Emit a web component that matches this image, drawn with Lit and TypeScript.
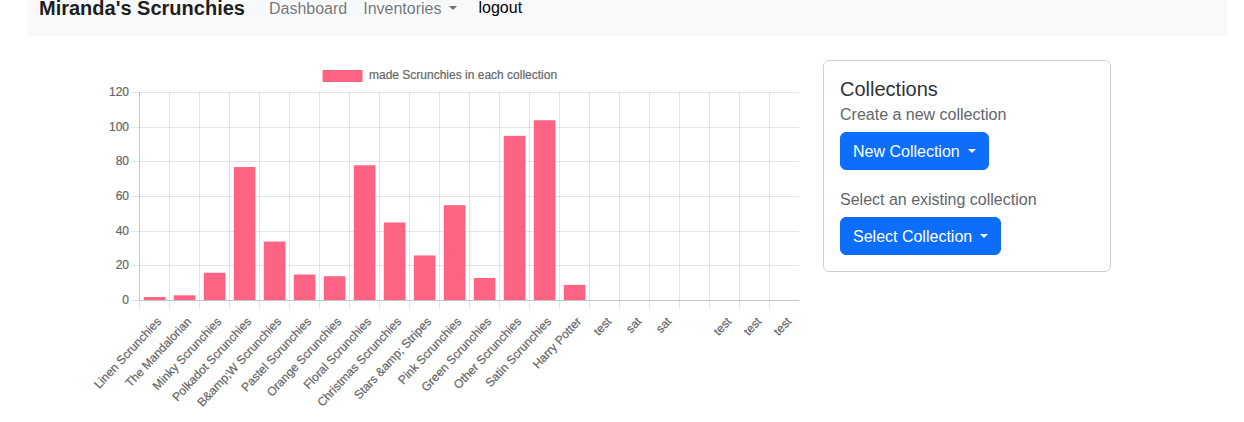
import { LitElement, html, svg, css } from "lit";
import { customElement, property } from "lit/decorators.js";

interface Entry {
  label: string;
  value: number;
}

const COLLECTIONS: Entry[] = [
  { label: "Linen Scrunchies", value: 2 },
  { label: "The Mandalorian", value: 3 },
  { label: "Minky Scrunchies", value: 16 },
  { label: "Polkadot Scrunchies", value: 77 },
  { label: "B&amp;W Scrunchies", value: 34 },
  { label: "Pastel Scrunchies", value: 15 },
  { label: "Orange Scrunchies", value: 14 },
  { label: "Floral Scrunchies", value: 78 },
  { label: "Christmas Scrunchies", value: 45 },
  { label: "Stars &amp; Stripes", value: 26 },
  { label: "Pink Scrunchies", value: 55 },
  { label: "Green Scrunchies", value: 13 },
  { label: "Other Scrunchies", value: 95 },
  { label: "Satin Scrunchies", value: 104 },
  { label: "Harry Potter", value: 9 },
  { label: "test", value: 0 },
  { label: "sat", value: 0 },
  { label: "sat", value: 0 },
  { label: "", value: 0 },
  { label: "test", value: 0 },
  { label: "test", value: 0 },
  { label: "test", value: 0 },
];

@customElement("bar-chart")
export class BarChart extends LitElement {
  @property({ attribute: false }) entries: Entry[] = [];
  @property() legend = "";

  static styles = css`
    :host {
      display: block;
    }
    .chart {
      display: block;
      width: 100%;
      height: auto;
      overflow: visible;
      font-family: "Liberation Sans", Arial, sans-serif;
      font-size: 12px;
    }
    .text {
      fill: #666;
      stroke: #666;
      stroke-width: 0.2px;
    }
    .end {
      text-anchor: end;
    }
    .bar {
      fill: #ff6384;
    }
    .line {
      stroke: rgba(0, 0, 0, 0.1);
    }
    .axis {
      stroke: rgba(0, 0, 0, 0.22);
    }
  `;

  render() {
    const left = 60;
    const top = 32;
    const bottom = 240;
    const right = 720;
    const max = 120;
    const step = (right - left) / this.entries.length;
    const scale = (v: number) => bottom + 0.5 - (v / max) * (bottom - top);
    const ticks = [0, 20, 40, 60, 80, 100, 120];
    return html`
      <svg class="chart" viewBox="0 0 720 352" role="img" aria-label=${this.legend}>
        <rect class="bar" x="243.5" y="10" width="40" height="12"></rect>
        <text class="text" x="290" y="19">${this.legend}</text>
        ${ticks.map((t) => {
          const y = Math.floor(scale(t)) + 0.5;
          return svg`
            <line class=${t === 0 ? "axis" : "line"} x1=${t === 0 ? left : left - 8} x2=${right} y1=${y} y2=${y}></line>
            ${t === 0 ? svg`<line class="line" x1=${left - 8} x2=${left} y1=${y} y2=${y}></line>` : ""}
            <text class="text end" x="50" y=${y + 3}>${t}</text>`;
        })}
        ${this.entries.map((e, i) => {
          const x = left + i * step;
          return svg`
            <line class=${i === 0 ? "axis" : "line"} x1=${x + 0.5} x2=${x + 0.5} y1=${top} y2=${bottom}></line>
            <line class="line" x1=${x + 0.5} x2=${x + 0.5} y1=${bottom + 1} y2=${bottom + 9}></line>`;
        })}
        ${this.entries.map((e, i) => {
          const x = left + i * step;
          const y = scale(e.value);
          return svg`
            <rect class="bar" x=${x + 4.8} y=${y} width="21.6" height=${Math.max(0, bottom - y)}></rect>
            <text class="text end" transform="translate(${x + 23} 262) rotate(-47)">${e.label}</text>`;
        })}
      </svg>
    `;
  }
}

@customElement("app-root")
export class AppRoot extends LitElement {
  static styles = css`
    :host {
      display: block;
      overflow: hidden;
      font-family: "Liberation Sans", Arial, sans-serif;
      font-size: 16px;
      line-height: 24px;
      color: #212529;
      background: #fff;
    }
    .navbar {
      display: flex;
      align-items: center;
      box-sizing: border-box;
      height: 56px;
      margin: -20px 17px 0 27px;
      padding: 8px 12px;
      background: #f8f9fb;
    }
    .brand {
      margin-right: 16px;
      font-size: 20px;
      line-height: 30px;
      font-weight: 700;
      color: rgba(0, 0, 0, 0.9);
      text-decoration: none;
    }
    .link {
      padding: 9px 8px 7px;
      border: 0;
      background: none;
      font: inherit;
      color: rgba(0, 0, 0, 0.55);
      text-decoration: none;
    }
    .logout {
      margin-left: 5px;
      padding: 8px;
      color: #000;
    }
    .caret::after {
      content: "";
      display: inline-block;
      margin-left: 8px;
      vertical-align: 4px;
      border: 4px solid transparent;
      border-top-color: currentColor;
      border-bottom: 0;
    }
    .content {
      display: grid;
      grid-template-columns: minmax(0, 5fr) minmax(0, 2fr);
      gap: 24px;
      align-items: start;
      padding: 24px 133px 0 79px;
    }
    .card {
      padding: 16px;
      border: 1px solid rgba(0, 0, 0, 0.18);
      border-radius: 6px;
    }
    .title {
      margin: 0 0 4px;
      font-size: 20px;
      line-height: 24px;
      font-weight: 400;
      color: #303336;
    }
    .subtitle {
      margin: 0 0 8px;
      font-size: 16px;
      line-height: 19px;
      font-weight: 400;
      color: #62666a;
    }
    .button {
      display: block;
      padding: 7px 12px 5px;
      border: 1px solid #0d6efd;
      border-radius: 6px;
      background: #0d6efd;
      font: inherit;
      color: #fff;
    }
    .group + .group {
      margin-top: 20px;
    }
  `;

  render() {
    return html`
      <nav class="navbar">
        <a class="brand" href="#">Miranda's Scrunchies</a>
        <a class="link" href="#">Dashboard</a>
        <button class="link caret" type="button" aria-haspopup="true">Inventories</button>
        <a class="link logout" href="#">logout</a>
      </nav>
      <main class="content">
        <bar-chart .entries=${COLLECTIONS} legend="made Scrunchies in each collection"></bar-chart>
        <section class="card">
          <h5 class="title">Collections</h5>
          <div class="group">
            <h6 class="subtitle">Create a new collection</h6>
            <button class="button caret" type="button" aria-haspopup="true">New Collection</button>
          </div>
          <div class="group">
            <h6 class="subtitle">Select an existing collection</h6>
            <button class="button caret" type="button" aria-haspopup="true">Select Collection</button>
          </div>
        </section>
      </main>
    `;
  }
}
